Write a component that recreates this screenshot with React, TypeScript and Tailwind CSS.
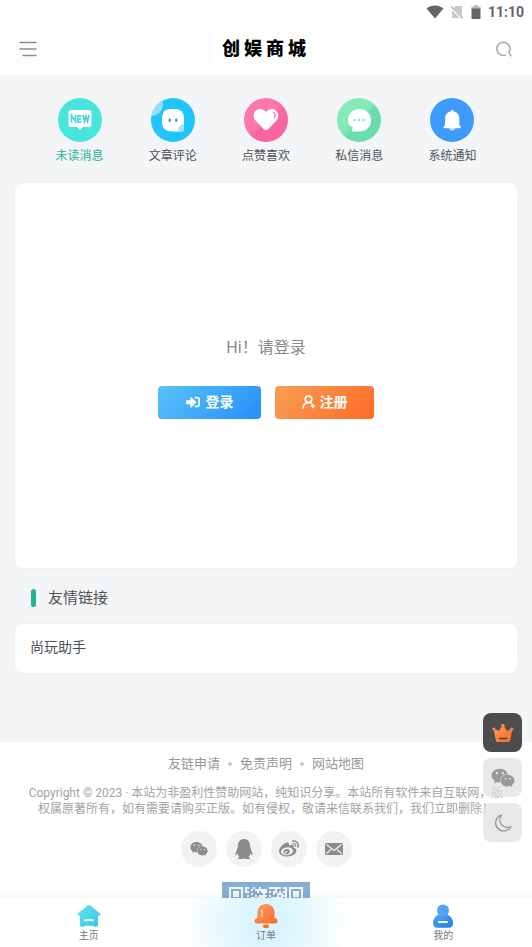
import type { ReactNode } from 'react'
import { FaQq, FaSignInAlt, FaWeibo, FaWeixin } from 'react-icons/fa'

function NewIcon() {
  return (
    <svg viewBox="0 0 44 44" className="size-11" aria-hidden="true">
      <circle cx="22" cy="22" r="22" fill="#48e5de" />
      <path d="M13 12h18a2.500 2.500 0 0 1 2.500 2.500v12A2.500 2.500 0 0 1 31 29h-6l-3 3-3-3h-6a2.500 2.500 0 0 1-2.500-2.500v-12A2.500 2.500 0 0 1 13 12z" fill="#fff" />
      <g fill="none" stroke="#48d8d3" strokeWidth="1.700">
        <path d="M13.500 24.500v-7l4 6v-6.500" />
        <path d="M23.500 17.800h-3.500v6h3.500M20 20.800h3" />
        <path d="M25 17l1.500 6.500 1.500-5 1.500 5 1.500-6.500" />
      </g>
    </svg>
  )
}

function CommentIcon() {
  return (
    <svg viewBox="0 0 44 44" className="size-11" aria-hidden="true">
      <defs>
        <clipPath id="commentClip"><circle cx="22" cy="22" r="22" /></clipPath>
      </defs>
      <g clipPath="url(#commentClip)">
        <rect width="44" height="44" fill="#23c4fd" />
        <circle cx="0" cy="6" r="12" fill="#93e0fb" />
      </g>
      <path d="M22 11c8.500 0 11 2.500 11 11v8.500c0 2-1 3-3 3h-8c-8.500 0-11-3-11-11.500S13.500 11 22 11z" fill="#fff" />
      <path d="M33 26v5c0 1.700-.8 2.500-2.500 2.500H27c0-4 2-7 6-7.500z" fill="#a5e6fd" />
      <rect x="17.500" y="20.500" width="2.500" height="3.500" rx="1.200" fill="#4a9fc4" />
      <rect x="24" y="20.500" width="2.500" height="3.500" rx="1.200" fill="#4a9fc4" />
    </svg>
  )
}

function HeartIcon() {
  return (
    <svg viewBox="0 0 44 44" className="size-11" aria-hidden="true">
      <defs>
        <linearGradient id="heartBg" x1="0" y1="0" x2="1" y2="1">
          <stop offset="0.450" stopColor="#fb78ae" />
          <stop offset="0.550" stopColor="#fb64a2" />
        </linearGradient>
      </defs>
      <circle cx="22" cy="22" r="22" fill="url(#heartBg)" />
      <path d="M22 14c2.500-3.500 7.700-3.900 10.500-.9 2.600 3 2.400 7-.2 9.700l-8.100 8.400c-1.400 1.400-3 1.400-4.400 0l-8.100-8.400c-2.600-2.700-2.800-6.700-.2-9.700 2.800-3 8-2.600 10.500.9z" fill="#fff" />
      <path d="M29.500 14.500c1.700.9 2.100 3.400.8 5.200" fill="none" stroke="#fc81b3" strokeWidth="1.400" strokeLinecap="round" />
    </svg>
  )
}

function ChatIcon() {
  return (
    <svg viewBox="0 0 44 44" className="size-11" aria-hidden="true">
      <defs>
        <linearGradient id="chatBg" x1="0" y1="0" x2="1" y2="1">
          <stop offset="0.450" stopColor="#84eabb" />
          <stop offset="0.550" stopColor="#69deac" />
        </linearGradient>
      </defs>
      <circle cx="22" cy="22" r="22" fill="url(#chatBg)" />
      <path d="M22.500 11C29 11 34 15.800 34 22.200S29 33.500 22.500 33.500H16c-1.200 0-1.500-.8-1-1.800l.8-1.900c-3-2-4.800-4.500-4.800-7.800C11 15.800 16 11 22.500 11z" fill="#fff" />
      <g fill="#a3d9c2">
        <circle cx="17.500" cy="22" r="1.300" />
        <circle cx="22" cy="22" r="1.300" />
        <circle cx="26.500" cy="22" r="1.300" />
      </g>
    </svg>
  )
}

function BellIcon() {
  return (
    <svg viewBox="0 0 44 44" className="size-11" aria-hidden="true">
      <circle cx="22" cy="22" r="22" fill="#3e9bfd" />
      <path d="M19 29h6.500c0 2.400-1.400 3.800-3.200 3.800S19 31.400 19 29z" fill="#b6d9ff" />
      <path d="M22.200 12c.9 0 1.500.6 1.600 1.400 3.300.7 5.500 3.300 5.500 6.900v6.500l1.500 2c.5.800.2 1.400-.7 1.400H14.300c-.9 0-1.200-.6-.7-1.400l1.500-2v-6.500c0-3.600 2.200-6.200 5.500-6.900.1-.8.7-1.400 1.600-1.400z" fill="#fff" />
    </svg>
  )
}

function UserAddIcon() {
  return (
    <svg viewBox="0 0 14 14" className="size-3.5" fill="none" stroke="currentColor" strokeWidth="1.700" strokeLinecap="round" aria-hidden="true">
      <circle cx="6.500" cy="4.300" r="3.300" />
      <path d="M1 13c.3-3 2-5 4.500-5.400M8 7.400l1.500 1M10.800 9.500v3M9.300 11h3" />
    </svg>
  )
}

function MailIcon() {
  return (
    <svg viewBox="0 0 18 14" className="h-3.5 w-[18px]" aria-hidden="true">
      <rect x="0" y="1" width="18" height="12" rx="1.500" fill="currentColor" />
      <path d="M1.500 2.500L9 8.500l7.500-6M1.500 11.500L6 7.500M16.500 11.500L12 7.500" fill="none" stroke="#f2f2f2" strokeWidth="1.100" />
    </svg>
  )
}

function CrownIcon() {
  return (
    <svg viewBox="0 0 22 20" className="h-5 w-[22px]" aria-hidden="true">
      <defs>
        <linearGradient id="crown" x1="0" y1="0" x2="1" y2="1">
          <stop offset="0" stopColor="#fda45c" />
          <stop offset="1" stopColor="#f9652a" />
        </linearGradient>
      </defs>
      <g fill="url(#crown)">
        <path d="M11 1.500l4 6.500 5.500-2.500-2.300 12c-.2.900-.8 1.500-1.700 1.500h-11c-.9 0-1.500-.6-1.700-1.500l-2.300-12L7 8z" />
        <circle cx="11" cy="2.500" r="1.800" />
        <circle cx="2" cy="6" r="1.600" />
        <circle cx="20" cy="6" r="1.600" />
      </g>
      <path d="M7.500 15.500h7" stroke="#50392f" strokeWidth="1.500" strokeLinecap="round" />
    </svg>
  )
}

function HomeNavIcon() {
  return (
    <svg viewBox="0 0 24 24" className="size-6" aria-hidden="true">
      <defs>
        <linearGradient id="homeFill" x1="0" y1="0" x2="1" y2="1">
          <stop offset="0" stopColor="#64e6ee" />
          <stop offset="1" stopColor="#35c3e6" />
        </linearGradient>
      </defs>
      <path d="M10.500 1.600c.9-.8 2.100-.8 3 0l9.500 8c1 .9.600 1.900-.6 1.900H21v9.300c0 1.200-.7 1.900-1.900 1.900h-2l-.8-1H7.700l-.8 1h-2c-1.200 0-1.900-.7-1.900-1.900v-9.300H1.600c-1.200 0-1.600-1-.6-1.900z" fill="url(#homeFill)" />
      <path d="M8 16.200h8" stroke="#fff" strokeWidth="2" strokeLinecap="round" />
    </svg>
  )
}

function OrderNavIcon() {
  return (
    <svg viewBox="0 0 24 24" className="size-6" aria-hidden="true">
      <defs>
        <linearGradient id="orderFill" x1="0" y1="0" x2="1" y2="1">
          <stop offset="0" stopColor="#fd9a5d" />
          <stop offset="1" stopColor="#fd6c2b" />
        </linearGradient>
      </defs>
      <rect x="9" y="20.500" width="6" height="3.500" rx="1.700" fill="#fd6c2b" />
      <path d="M12 0c5 0 8.500 3.600 8.500 8.500V14l1.500.6c2.300 1 2 4.900-1 4.900H3c-3 0-3.300-3.900-1-4.900l1.500-.6V8.500C3.500 3.600 7 0 12 0z" fill="url(#orderFill)" />
      <path d="M8 6.500v6" stroke="#ffe0cc" strokeWidth="1.600" strokeLinecap="round" />
    </svg>
  )
}

function MeNavIcon() {
  return (
    <svg viewBox="0 0 24 24" className="size-6" aria-hidden="true">
      <defs>
        <linearGradient id="meFill" x1="0" y1="0" x2="1" y2="1">
          <stop offset="0" stopColor="#4fa9f7" />
          <stop offset="1" stopColor="#2579e4" />
        </linearGradient>
      </defs>
      <path d="M7.500 10.500h9c3.200 1.500 5.500 4.800 5.500 8.500 0 3-1.500 4.700-4.500 4.700h-11C3.500 23.700 2 22 2 19c0-3.700 2.300-7 5.500-8.500z" fill="url(#meFill)" />
      <circle cx="12" cy="6.500" r="6" fill="#4fa6f6" />
      <path d="M8 18h8" stroke="#fff" strokeWidth="2" strokeLinecap="round" />
    </svg>
  )
}

const QR_SIZE = 37

// finder squares in three corners, scattered modules elsewhere
function isLight(x: number, y: number) {
  const finder = (fx: number, fy: number) => {
    const dx = x - fx
    const dy = y - fy
    if (dx < -1 || dy < -1 || dx > 7 || dy > 7) return null
    if (dx < 0 || dy < 0 || dx > 6 || dy > 6) return false
    return Math.max(Math.abs(dx - 3), Math.abs(dy - 3)) !== 2
  }
  const corner = finder(0, 0) ?? finder(QR_SIZE - 7, 0) ?? finder(0, QR_SIZE - 7)
  if (corner !== null) return corner
  return (x * 7 + y * 13 + x * y * 5 + ((x * x) % 11)) % 9 < 5
}

function QrCode() {
  const cells: ReactNode[] = []
  for (let y = 0; y < QR_SIZE; y++) {
    for (let x = 0; x < QR_SIZE; x++) {
      if (isLight(x, y)) cells.push(<rect key={`${x}-${y}`} x={7 + x * 2} y={5 + y * 2} width="2" height="2" />)
    }
  }
  return (
    <svg viewBox="0 0 88 88" className="size-[88px] shrink-0" role="img" aria-label="QR code">
      <rect width="88" height="88" fill="#88add3" />
      <g fill="#f1f6fb">{cells}</g>
    </svg>
  )
}

const categories = [
  { label: '未读消息', icon: <NewIcon />, active: true },
  { label: '文章评论', icon: <CommentIcon /> },
  { label: '点赞喜欢', icon: <HeartIcon /> },
  { label: '私信消息', icon: <ChatIcon /> },
  { label: '系统通知', icon: <BellIcon /> },
]

const socials = [
  { label: '微信', icon: <FaWeixin className="size-[18px]" /> },
  { label: 'QQ', icon: <FaQq className="size-5" /> },
  { label: '微博', icon: <FaWeibo className="size-5" /> },
  { label: '邮箱', icon: <MailIcon /> },
]

const tabs = [
  { label: '主页', icon: <HomeNavIcon /> },
  { label: '订单', icon: <OrderNavIcon />, active: true },
  { label: '我的', icon: <MeNavIcon /> },
]

function StatusBar() {
  return (
    <div className="flex h-6 shrink-0 items-center justify-end gap-1.5 bg-white pr-2 text-[#666]">
      <svg viewBox="0 0 18 14" className="h-3.5 w-[18px]" aria-hidden="true">
        <path d="M0.500 3.500C5-.6 13-.6 17.500 3.500L9 13.500z" fill="currentColor" />
      </svg>
      <svg viewBox="0 0 14 14" className="size-3.5" aria-hidden="true">
        <path d="M5.500 1H12v12H2V4.500z" fill="#c9c9c9" />
        <path d="M0 1.500L12.500 14" stroke="#fff" strokeWidth="2.500" />
        <path d="M1 1.500L13 13.500" stroke="#b8b8b8" strokeWidth="1.200" />
      </svg>
      <svg viewBox="0 0 12 14" className="h-3.5 w-3" aria-hidden="true">
        <path d="M4 0h4v1.500h2.500V4h-9V1.500H4z" fill="#bdbdbd" />
        <path d="M1.500 3.500h9V14h-9z" fill="currentColor" />
      </svg>
      <span className="text-sm leading-6 font-bold">11:10</span>
    </div>
  )
}

function Header() {
  return (
    <header className="flex h-[51px] shrink-0 items-center justify-between bg-[#fcfdff] px-[18px] pb-0.5">
      <button type="button" aria-label="菜单" className="flex w-5 justify-center text-[#8f8f8f]">
        <svg viewBox="0 0 18 16" className="h-4 w-[18px]" fill="none" stroke="currentColor" strokeWidth="1.600" strokeLinecap="round" aria-hidden="true">
          <path d="M1 1.500h16M1 8h16M4 14.500h13" />
        </svg>
      </button>
      <h1 className="flex h-9 items-center gap-1 bg-white pr-3.5 pl-2.5 text-lg leading-6 font-black text-black">
        <span>创</span>
        <span>娱</span>
        <span>商</span>
        <span>城</span>
      </h1>
      <button type="button" aria-label="搜索" className="flex w-5 justify-center text-[#aaa]">
        <svg viewBox="0 0 16 16" className="size-4" fill="none" stroke="currentColor" strokeWidth="1.500" strokeLinecap="round" aria-hidden="true">
          <path d="M9.500 14.100A6.600 6.600 0 1 1 12.900 11.500L15 14.800" />
        </svg>
      </button>
    </header>
  )
}

function FloatButton({ label, className, children }: { label: string; className: string; children: ReactNode }) {
  return (
    <button type="button" aria-label={label} className={`flex size-[39px] items-center justify-center rounded-lg ${className}`}>
      {children}
    </button>
  )
}

export default function App() {
  return (
    <div className="flex h-screen flex-col overflow-hidden bg-[#f4f5f7] font-[Roboto,'Noto_Sans_CJK_SC',sans-serif] text-[#4e5358]">
      <StatusBar />
      <Header />

      <main className="min-h-0 flex-1 overflow-hidden">
        <nav className="grid grid-cols-5 px-[33px] pt-[23px]">
          {categories.map((item) => (
            <a key={item.label} href="#" className={`flex flex-col items-center gap-1 text-xs leading-5 ${item.active ? 'text-[#27b292]' : 'text-[#4e5358]'}`}>
              {item.icon}
              {item.label}
            </a>
          ))}
        </nav>

        <section className="mx-[15px] mt-[17px] flex h-[385px] flex-col items-center justify-center gap-6 rounded-lg bg-white pt-0.5 shadow-[0_0_10px_rgba(116,116,116,0.06)]">
          <p className="text-base leading-7 text-[#888]">Hi！请登录</p>
          <div className="flex gap-3.5 text-sm font-bold text-white">
            <button type="button" className="flex h-[33px] w-[103px] items-center justify-center gap-1.5 rounded bg-linear-135 from-[#59c3fb] to-[#268df7] pb-0.5">
              <FaSignInAlt className="size-3.5" />
              登录
            </button>
            <button type="button" className="flex h-[33px] w-[99px] items-center justify-center gap-1 rounded bg-linear-135 from-[#f59f54] to-[#ff6922] pb-0.5">
              <UserAddIcon />
              注册
            </button>
          </div>
        </section>

        <h2 className="mx-[31px] mt-5 flex items-center gap-3 text-[15px] leading-5">
          <span className="h-[18px] w-[5px] rounded-full bg-[#1fb593]" />
          友情链接
        </h2>
        <div className="mx-[15px] mt-4 flex h-[49px] items-center rounded-lg bg-white px-[15px] pb-1 text-sm shadow-[0_0_10px_rgba(116,116,116,0.06)]">
          <a href="#">尚玩助手</a>
        </div>

        <footer className="mt-[69px] flex flex-col items-center bg-white px-7 pt-3 text-[#999]">
          <div className="flex items-center gap-2 text-[13px] leading-5">
            <a href="#">友链申请</a>
            <span className="size-1 rounded-full bg-[#ccc]" />
            <a href="#">免责声明</a>
            <span className="size-1 rounded-full bg-[#ccc]" />
            <a href="#">网站地图</a>
          </div>
          <p className="mt-[11px] text-center text-xs leading-4 text-[#a3a3a3]">
            Copyright © 2023 · 本站为非盈利性赞助网站，纯知识分享。本站所有软件来自互联网，版权属原著所有，如有需要请购买正版。如有侵权，敬请来信联系我们，我们立即删除！
          </p>
          <div className="mt-3.5 flex gap-[9px]">
            {socials.map((item) => (
              <a key={item.label} href="#" aria-label={item.label} className="flex size-9 items-center justify-center rounded-full bg-[#f2f2f2] text-[#8c8c8c]">
                {item.icon}
              </a>
            ))}
          </div>
          <div className="mt-[15px]">
            <QrCode />
          </div>
        </footer>
      </main>

      <nav className="z-10 grid h-[49px] shrink-0 grid-cols-3 bg-white shadow-[0_0_8px_rgba(0,0,0,0.08)]">
        {tabs.map((tab) => (
          <a
            key={tab.label}
            href="#"
            className={`flex flex-col items-center pt-1.5 text-[10px] leading-4 text-[#777] ${tab.active ? 'bg-[radial-gradient(circle_at_center,#daf5ff_20px,#ffffff_84px)]' : ''}`}
          >
            {tab.icon}
            {tab.label}
          </a>
        ))}
      </nav>

      <div className="fixed right-2.5 bottom-[105px] z-20 flex flex-col gap-1.5">
        <FloatButton label="会员" className="bg-[#4d4d50]">
          <CrownIcon />
        </FloatButton>
        <FloatButton label="微信" className="bg-[#e2e2e2]/75 text-[#999]">
          <FaWeixin className="size-6" />
        </FloatButton>
        <FloatButton label="夜间模式" className="bg-[#e2e2e2]/75 text-[#999]">
          <svg viewBox="0 0 18 18" className="size-[18px]" fill="none" stroke="currentColor" strokeWidth="1.400" strokeLinejoin="round" aria-hidden="true">
            <path d="M7.500 1.200A8 8 0 1 0 16.800 12.500 7.500 7.500 0 0 1 7.500 1.200z" />
          </svg>
        </FloatButton>
      </div>
    </div>
  )
}
